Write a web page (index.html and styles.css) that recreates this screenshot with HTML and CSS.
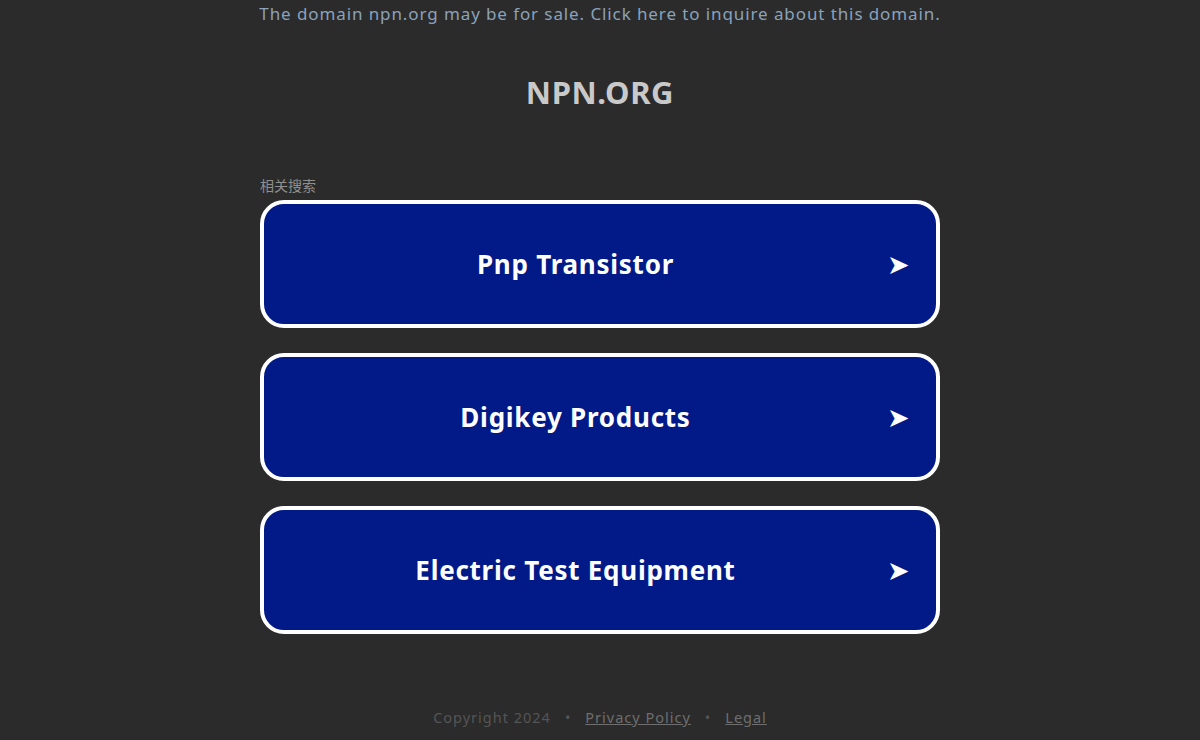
FILE: index.html
```html
<!DOCTYPE html>
<html lang="en">
<head>
<meta charset="utf-8">
<title>npn.org</title>
<link rel="stylesheet" href="styles.css">
</head>
<body>
<div class="page">
  <a class="sale" href="#">The domain npn.org may be for sale. Click here to inquire about this domain.</a>
  <h1 class="title">NPN.ORG</h1>
  <div class="related">
    <div class="label">相关搜索</div>
    <a class="item" href="#"><span class="text">Pnp Transistor</span><span class="arrow">➤</span></a>
    <a class="item" href="#"><span class="text">Digikey Products</span><span class="arrow">➤</span></a>
    <a class="item" href="#"><span class="text">Electric Test Equipment</span><span class="arrow">➤</span></a>
  </div>
  <div class="footer">
    <span class="copy">Copyright 2024</span>
    <span class="dot">•</span>
    <a href="#" class="flink">Privacy Policy</a>
    <span class="dot">•</span>
    <a href="#" class="flink">Legal</a>
  </div>
</div>
</body>
</html>
```

FILE: styles.css
```css
html, body {
  margin: 0;
  padding: 0;
  background: #2b2b2b;
  height: 100%;
}
body {
  font-family: "Noto Sans", "Open Sans", sans-serif;
}
.page {
  display: flex;
  flex-direction: column;
  align-items: center;
  height: 740px;
}
.sale {
  margin-top: 3px;
  font-size: 17px;
  line-height: 22px;
  letter-spacing: 0.9px;
  color: #8aa2bb;
  text-decoration: none;
}
.title {
  margin: 49px 0 0;
  font-size: 31px;
  line-height: 36px;
  letter-spacing: 0.6px;
  font-weight: 700;
  color: #c9c9c9;
}
.related {
  width: 680px;
  margin-top: 67px;
  display: flex;
  flex-direction: column;
}
.label {
  font-family: "Noto Sans CJK SC", "Noto Sans", sans-serif;
  font-size: 14px;
  line-height: 16px;
  color: #8f8f8f;
  margin-bottom: 7px;
}
.item {
  display: flex;
  align-items: center;
  height: 120px;
  border: 4px solid #ffffff;
  border-radius: 24px;
  background: #011a87;
  color: #ffffff;
  text-decoration: none;
  margin-bottom: 25px;
  padding-right: 28px;
}
.text {
  flex: 1;
  text-align: center;
  font-size: 26px;
  letter-spacing: 0.75px;
  font-weight: 700;
}
.arrow {
  width: 21px;
  font-size: 27px;
  line-height: 1;
  font-family: "DejaVu Sans", sans-serif;
}
.footer {
  margin-top: auto;
  margin-bottom: 13px;
  display: flex;
  gap: 14px;
  font-size: 14.5px;
  letter-spacing: 1px;
  color: #555555;
}
.flink {
  color: #6e6e6e;
}
```
